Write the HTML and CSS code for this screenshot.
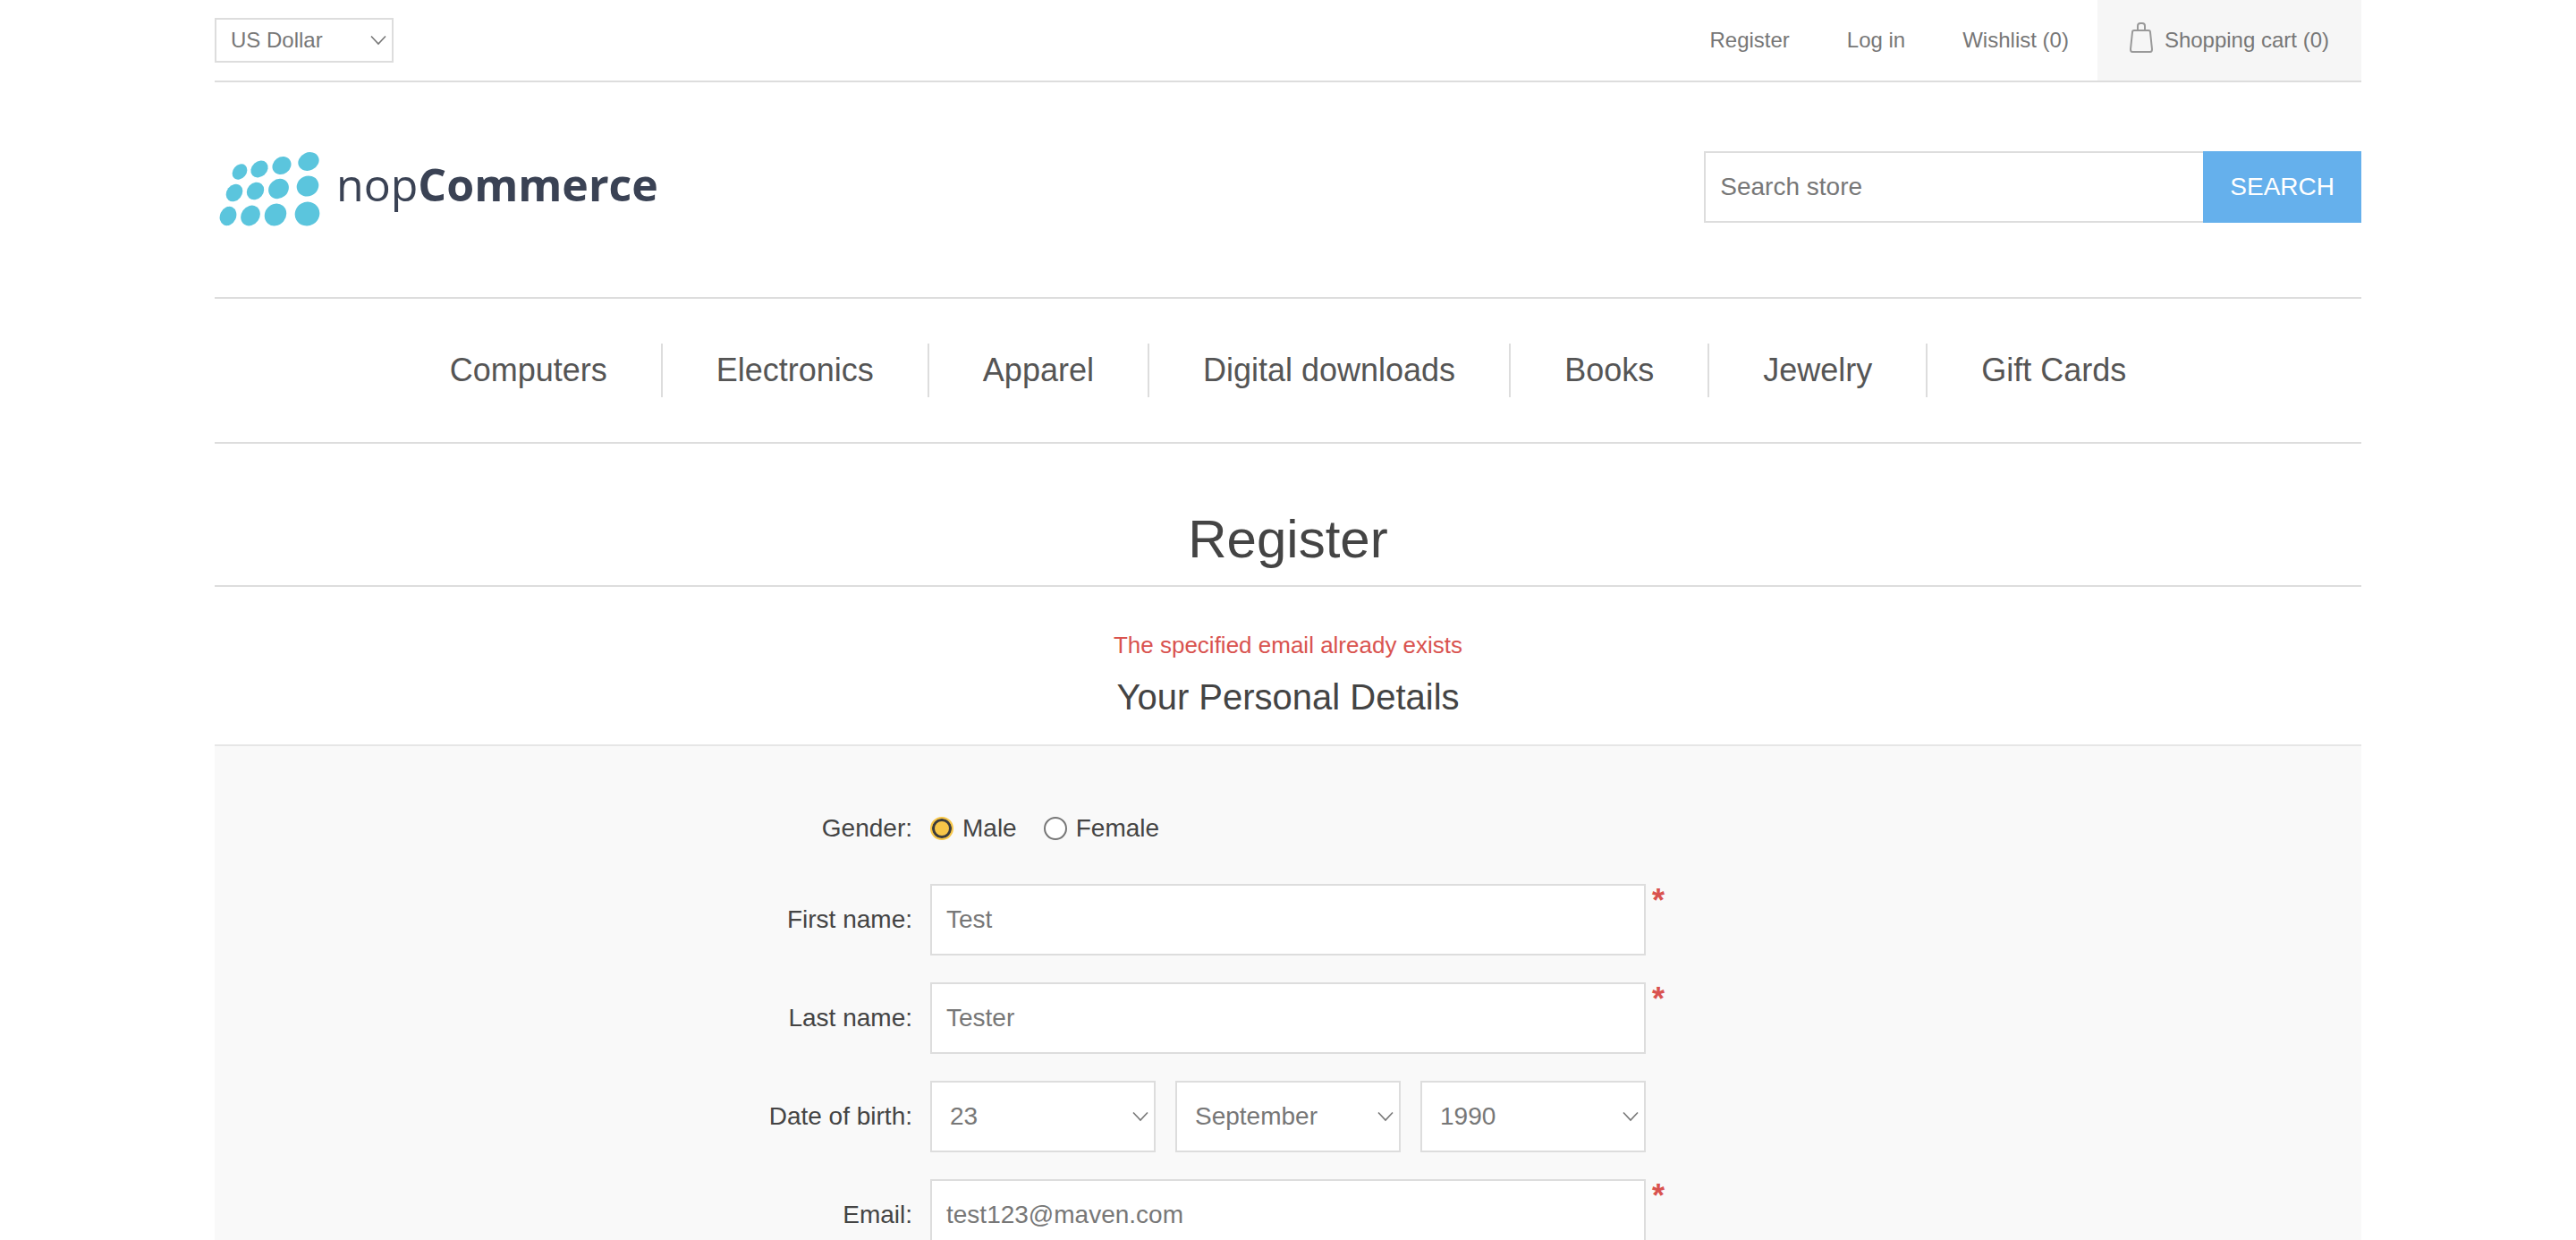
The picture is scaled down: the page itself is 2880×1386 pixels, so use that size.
FILE: index.html
```html
<!DOCTYPE html>
<html lang="en">
<head>
<meta charset="utf-8">
<meta name="viewport" content="width=device-width, initial-scale=1">
<title>nopCommerce demo store. Register</title>
<link rel="stylesheet" href="styles.css">
</head>
<body>
<div class="page">
  <header>
    <div class="header-upper">
      <select class="select currency" aria-label="Currency">
        <option>US Dollar</option>
        <option>Euro</option>
      </select>
      <nav class="account-links" aria-label="Account">
        <a href="#">Register</a>
        <a href="#">Log in</a>
        <a href="#">Wishlist (0)</a>
        <a class="cart" href="#">
          <svg class="cart-icon" viewBox="0 0 26 36" aria-hidden="true">
            <path d="M5 10 H21 Q23 10 23 12 L25 31 Q25 34 23 34 H3 Q1 34 1 31 L3 12 Q3 10 5 10 Z"/>
            <path d="M9 10 V5 Q9 2 12 2 H14 Q17 2 17 5 V10"/>
          </svg>
          <span>Shopping cart (0)</span>
        </a>
      </nav>
    </div>
    <div class="header-lower">
      <a class="logo" href="#">
        <svg class="logo-mark" viewBox="0 0 122 88" aria-hidden="true">
          <ellipse cx="28" cy="27" rx="9.5" ry="7.5" transform="rotate(-50 28 27)"/>
          <ellipse cx="50" cy="24" rx="10.5" ry="8.5" transform="rotate(-42 50 24)"/>
          <ellipse cx="75" cy="20" rx="11" ry="9.5" transform="rotate(-35 75 20)"/>
          <ellipse cx="105" cy="15.500" rx="12" ry="10" transform="rotate(-25 105 15.5)"/>
          <ellipse cx="22" cy="50.500" rx="10.500" ry="8.500" transform="rotate(-52 22 50.5)"/>
          <ellipse cx="45.500" cy="48.500" rx="10.500" ry="9" transform="rotate(-48 45.5 48.5)"/>
          <ellipse cx="71.500" cy="46" rx="12" ry="10.500" transform="rotate(-40 71.5 46)"/>
          <ellipse cx="104" cy="43" rx="12.5" ry="11.2" transform="rotate(-25 104 43)"/>
          <ellipse cx="15" cy="76.500" rx="11" ry="9" transform="rotate(-65 15 76.5)"/>
          <ellipse cx="40" cy="76" rx="12" ry="10.200" transform="rotate(-55 40 76)"/>
          <ellipse cx="68" cy="75" rx="13" ry="11.7" transform="rotate(-50 68 75)"/>
          <ellipse cx="103.500" cy="74" rx="14" ry="13.300" transform="rotate(-30 103.5 74)"/>
        </svg>
        <span class="logo-text">nop<b>Commerce</b></span>
      </a>
      <form class="search">
        <input class="field search-field" type="text" placeholder="Search store" aria-label="Search store">
        <button class="search-button" type="submit">SEARCH</button>
      </form>
    </div>
    <nav aria-label="Catalog">
      <ul class="menu">
        <li><a href="#">Computers</a></li>
        <li><a href="#">Electronics</a></li>
        <li><a href="#">Apparel</a></li>
        <li><a href="#">Digital downloads</a></li>
        <li><a href="#">Books</a></li>
        <li><a href="#">Jewelry</a></li>
        <li><a href="#">Gift Cards</a></li>
      </ul>
    </nav>
  </header>
  <main>
    <h1 class="title">Register</h1>
    <p class="error">The specified email already exists</p>
    <h2 class="section-title">Your Personal Details</h2>
    <form class="details">
      <div class="row row-gender" role="radiogroup" aria-labelledby="gender">
        <span class="label" id="gender">Gender:</span>
        <div class="options">
          <label class="option"><input class="radio" type="radio" name="gender" checked>Male</label>
          <label class="option"><input class="radio" type="radio" name="gender">Female</label>
        </div>
      </div>
      <div class="row">
        <label class="label" for="first">First name:</label>
        <input class="field" id="first" type="text" value="Test">
        <span class="required">*</span>
      </div>
      <div class="row">
        <label class="label" for="last">Last name:</label>
        <input class="field" id="last" type="text" value="Tester">
        <span class="required">*</span>
      </div>
      <div class="row">
        <label class="label" for="day">Date of birth:</label>
        <div class="dates">
          <select class="select" id="day"><option>23</option></select>
          <select class="select" aria-label="Month"><option>September</option></select>
          <select class="select" aria-label="Year"><option>1990</option></select>
        </div>
      </div>
      <div class="row">
        <label class="label" for="email">Email:</label>
        <input class="field" id="email" type="email" value="test123@maven.com">
        <span class="required">*</span>
      </div>
    </form>
  </main>
</div>
</body>
</html>
```
FILE: styles.css
```css
* {
  box-sizing: border-box;
}

body {
  height: 100vh;
  margin: 0;
  overflow: hidden;
  background: #fff;
  color: #444;
  font: 28px/32px "Liberation Sans", Arial, Helvetica, sans-serif;
}

a {
  color: inherit;
  text-decoration: none;
}

input,
select,
button {
  margin: 0;
  border-radius: 0;
  font: inherit;
}

.page {
  width: calc(100% - 80px);
  max-width: 2400px;
  margin: 0 auto;
}

.field,
.select {
  width: 100%;
  height: 80px;
  border: 2px solid #ddd;
  background: #fff;
  color: #777;
}

.field {
  padding: 0 16px;
}

.select {
  appearance: none;
  padding: 0 32px 0 20px;
  background: #fff url("data:image/svg+xml,%3Csvg xmlns='http://www.w3.org/2000/svg' width='18' height='12' fill='none' stroke='%23777' stroke-width='1.6'%3E%3Cpath d='M1 1.500l8 8.500 8-8.500'/%3E%3C/svg%3E") no-repeat right 6px center;
}

/* Header */
.header-upper {
  display: flex;
  align-items: center;
  justify-content: space-between;
  border-bottom: 2px solid #ddd;
  color: #777;
  font-size: 24px;
}

.currency {
  width: 200px;
  height: 50px;
  padding-left: 16px;
}

.account-links {
  display: flex;
  line-height: 90px;
}

.account-links a {
  padding: 0 32px;
}

.account-links .cart {
  display: flex;
  align-items: center;
  gap: 13px;
  padding: 0 36px;
  background: #f6f6f6;
}

.cart-icon {
  width: 26px;
  height: 36px;
  margin-bottom: 6px;
  fill: none;
  stroke: #999;
  stroke-width: 2;
}

.header-lower {
  display: flex;
  align-items: center;
  justify-content: space-between;
  height: 240px;
  padding-bottom: 6px;
}

.logo {
  display: flex;
  align-items: center;
  gap: 14px;
}

.logo-mark {
  width: 122px;
  height: 88px;
  fill: #5bc5dd;
}

.logo-text {
  padding-bottom: 6px;
  color: #3a4254;
  font: 50px/60px "Open Sans", "Noto Sans", sans-serif;
}

.search {
  display: flex;
}

.search-field {
  width: 558px;
  border-right: 0;
}

.search-field::placeholder {
  color: #777;
  opacity: 1;
}

.search-button {
  padding: 0 30px;
  border: 0;
  background: #65b0ec;
  color: #fff;
}

.menu {
  display: flex;
  justify-content: center;
  margin: 0;
  padding: 50px 0;
  border: solid #ddd;
  border-width: 2px 0;
  color: #555;
  font-size: 36px;
  line-height: 60px;
  list-style: none;
}

.menu li {
  padding: 0 60px;
}

.menu li + li {
  border-left: 2px solid #ddd;
}

/* Registration */
.title {
  margin: 0;
  padding: 72px 0 16px;
  border-bottom: 2px solid #ddd;
  font-size: 60px;
  font-weight: 400;
  line-height: 70px;
  text-align: center;
}

.error {
  margin: 50px 0 20px;
  color: #d9534f;
  font-size: 26px;
  line-height: 30px;
  text-align: center;
}

.section-title {
  margin: 0;
  padding-bottom: 30px;
  font-size: 40px;
  font-weight: 400;
  line-height: 46px;
  text-align: center;
}

.details {
  display: grid;
  gap: 30px;
  padding: 60px 0;
  border-top: 2px solid #e6e6e6;
  background: #f9f9f9;
}

.row {
  display: grid;
  grid-template-columns: minmax(160px, 1fr) minmax(0, 800px) minmax(24px, 1fr);
  align-items: center;
}

.row-gender {
  min-height: 64px;
}

.label {
  padding-right: 20px;
  text-align: right;
}

.options {
  display: flex;
  gap: 30px;
}

.option {
  display: flex;
  align-items: center;
  gap: 10px;
}

.radio {
  appearance: none;
  width: 26px;
  height: 26px;
  border: 2px solid #777;
  border-radius: 50%;
  background: #fff;
}

.radio:checked {
  border-color: #f7c648;
  background: #f7c648;
  box-shadow: inset 0 0 0 3px #3c3c3c;
}

.dates {
  display: grid;
  grid-template-columns: repeat(3, 1fr);
  gap: 22px;
}

.required {
  align-self: start;
  padding-left: 7px;
  color: #d9534f;
  font-size: 36px;
  font-weight: 700;
  line-height: 38px;
}
```
